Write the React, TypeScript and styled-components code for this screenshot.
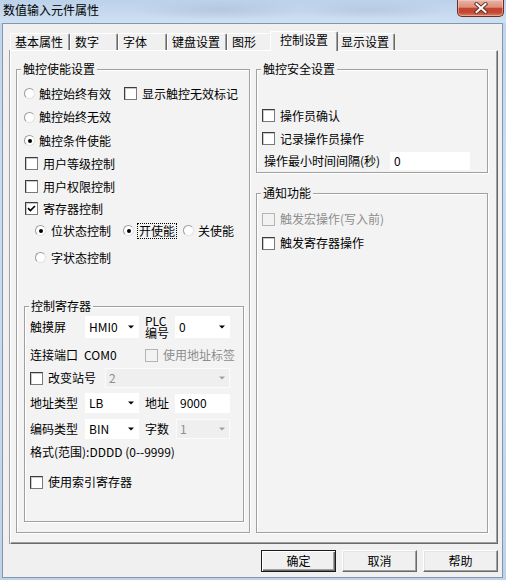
import React from 'react';
import styled, { createGlobalStyle, css } from 'styled-components';

const Global = createGlobalStyle`
  html, body { margin: 0; padding: 0; }
  body {
    width: 506px; height: 580px; overflow: hidden;
    font-family: "Noto Sans CJK SC", "Noto Sans", sans-serif;
    font-size: 12px; color: #000;
  }
`;

const PANEL_BG = '#f3f3f3';

const Window = styled.div`
  box-sizing: border-box;
  width: 506px;
  height: 580px;
  display: flex;
  flex-direction: column;
  padding: 0 3px 2px 2px;
  background: linear-gradient(180deg, #c0d4eb 0%, #cadcf0 30%, #c6d9ee 70%, #bfd2e8 100%);
`;

const TitleBar = styled.div`
  height: 23px;
  flex: none;
  display: flex;
  justify-content: space-between;
  align-items: flex-start;
  margin: 0 -3px 0 -2px;
  padding: 0 2px 0 3px;
  background:
    radial-gradient(ellipse 90px 10px at 220px 10px, rgba(150, 170, 195, 0.35), transparent),
    radial-gradient(ellipse 80px 9px at 370px 10px, rgba(150, 170, 195, 0.3), transparent),
    linear-gradient(180deg, #bcd1ea 0%, #cfe0f2 100%);
`;

const Title = styled.div`
  padding-top: 3px;
  line-height: 14px;
  font-size: 12px;
  color: #000;
  white-space: nowrap;
`;

const CloseButton = styled.div`
  box-sizing: border-box;
  width: 47px;
  height: 17px;
  display: flex;
  align-items: center;
  justify-content: center;
  border: 1px solid #6b2d25;
  border-top: none;
  border-radius: 0 0 5px 5px;
  background: linear-gradient(180deg, #e9b3a6 0%, #dc8f7b 45%, #c64330 52%, #c24a35 78%, #dc8066 100%);
  box-shadow: inset 0 0 0 1px rgba(255, 220, 210, 0.45);
`;

const Client = styled.div`
  flex: 1;
  display: flex;
  flex-direction: column;
  border: 1px solid #8296ad;
  background: #f0f0f0;
  padding: 0 4px 0 7px;
`;

const TabStrip = styled.div`
  height: 26px;
  flex: none;
  display: flex;
  align-items: flex-end;
`;

const Tab = styled.div<{ $w: number; $active?: boolean }>`
  box-sizing: border-box;
  position: relative;
  z-index: ${p => (p.$active ? 1 : 0)};
  width: ${p => p.$w}px;
  height: ${p => (p.$active ? 20 : 17)}px;
  margin: ${p => (p.$active ? '0 -2px -1px' : '0')};
  padding: ${p => (p.$active ? '0 0 0 9px' : '0 0 0 4px')};
  border-top: 1px solid #fff;
  border-left: 1px solid #fff;
  border-right: 1px solid #696969;
  border-radius: 2px 2px 0 0;
  box-shadow: inset -1px 0 0 #a0a0a0;
  background: ${p => (p.$active ? PANEL_BG : '#f0f0f0')};
  line-height: 16px;
  white-space: nowrap;
`;

const Panel = styled.div`
  box-sizing: border-box;
  height: 494px;
  flex: none;
  border-top: 1px solid #fff;
  border-left: 1px solid #fff;
  border-right: 1px solid #696969;
  border-bottom: 1px solid #696969;
  box-shadow: inset -1px -1px 0 #a0a0a0, -1px 0 0 #a0a0a0;
  background: ${PANEL_BG};
  display: grid;
  grid-template-columns: 234px 232px;
  column-gap: 6px;
  align-content: start;
  padding: 11px 0 0 5px;
`;

const Column = styled.div`
  display: flex;
  flex-direction: column;
`;

const Group = styled.fieldset<{ $h: number; $mt?: number; $w?: number }>`
  box-sizing: border-box;
  height: ${p => p.$h}px;
  ${p => (p.$w ? `width: ${p.$w}px;` : '')}
  margin: ${p => p.$mt ?? 0}px 0 0 0;
  padding: 0;
  min-width: 0;
  border: 1px solid #a0a0a0;
  box-shadow: inset 1px 1px 0 #fff, 1px 1px 0 #fff;
`;

const Legend = styled.legend`
  margin-left: 4px;
  padding: 0 2px;
  line-height: 14px;
  font-size: 12px;
  background: ${PANEL_BG};
`;

const GroupBody = styled.div<{ $pt: number; $pl: number }>`
  display: flex;
  flex-direction: column;
  padding: ${p => p.$pt}px 0 0 ${p => p.$pl}px;
`;

const Row = styled.div<{ $h?: number; $mt?: number; $indent?: number }>`
  display: flex;
  align-items: center;
  height: ${p => p.$h ?? 23}px;
  margin-top: ${p => p.$mt ?? 0}px;
  padding-left: ${p => p.$indent ?? 0}px;
  white-space: nowrap;
`;

const Option = styled.div<{ $gap?: number; $ml?: number; $disabled?: boolean }>`
  display: inline-flex;
  align-items: center;
  gap: ${p => p.$gap ?? 4}px;
  margin-left: ${p => p.$ml ?? 0}px;
  line-height: 14px;
  color: ${p => (p.$disabled ? '#8d8d8d' : '#000')};
  white-space: nowrap;
`;

const RadioCircle = styled.span<{ $checked?: boolean }>`
  box-sizing: border-box;
  flex: none;
  width: 11px;
  height: 11px;
  border-radius: 50%;
  border: 1px solid;
  border-color: #9c9c9c #e2e2e2 #e2e2e2 #9c9c9c;
  background: #fff;
  display: inline-flex;
  align-items: center;
  justify-content: center;
  &::after {
    content: '';
    width: 4px;
    height: 4px;
    border-radius: 50%;
    background: #000;
    display: ${p => (p.$checked ? 'block' : 'none')};
  }
`;

const CheckSquare = styled.span<{ $disabled?: boolean }>`
  box-sizing: border-box;
  flex: none;
  width: 13px;
  height: 13px;
  border: 1px solid;
  border-color: ${p => (p.$disabled ? '#b4b4b4' : '#3c3c3c #7a7a7a #7a7a7a #3c3c3c')};
  background: ${p => (p.$disabled ? '#f2f2f2' : '#fff')};
  box-shadow: ${p => (p.$disabled ? 'none' : 'inset 1px 1px 0 #c9c9c9')};
  display: inline-flex;
  align-items: center;
  justify-content: center;
`;

const FocusText = styled.span`
  border: 1px dotted #000;
  padding: 0 1px;
  line-height: 14px;
`;

const Label = styled.span<{ $w?: number; $pl?: number; $ml?: number }>`
  display: inline-block;
  ${p => (p.$w ? `width: ${p.$w}px;` : '')}
  padding-left: ${p => p.$pl ?? 0}px;
  margin-left: ${p => p.$ml ?? 0}px;
  line-height: 14px;
  flex: none;
`;

const StackLabel = styled.span<{ $w: number; $ml?: number }>`
  display: inline-flex;
  flex-direction: column;
  width: ${p => p.$w}px;
  margin-left: ${p => p.$ml ?? 0}px;
  line-height: 12px;
  flex: none;
`;

const Combo = styled.div<{ $w: number; $h?: number; $ml?: number; $disabled?: boolean }>`
  box-sizing: border-box;
  flex: none;
  width: ${p => p.$w}px;
  height: ${p => p.$h ?? 20}px;
  margin-left: ${p => p.$ml ?? 0}px;
  display: flex;
  align-items: center;
  justify-content: space-between;
  padding-left: 3px;
  background: ${p => (p.$disabled ? '#efefef' : '#fff')};
  border: 1px solid ${p => (p.$disabled ? '#fbfbfb' : '#fff')};
  color: ${p => (p.$disabled ? '#8d8d8d' : '#000')};
  line-height: 14px;
`;

const ArrowBox = styled.span`
  width: 14px;
  display: flex;
  justify-content: center;
  align-items: center;
`;

const TextBox = styled.div<{ $w: number; $h?: number; $ml?: number; $pl?: number }>`
  box-sizing: border-box;
  flex: none;
  width: ${p => p.$w}px;
  height: ${p => p.$h ?? 19}px;
  margin-left: ${p => p.$ml ?? 0}px;
  padding-left: ${p => p.$pl ?? 4}px;
  background: #fff;
  display: flex;
  align-items: center;
  line-height: 14px;
`;

const ButtonRow = styled.div`
  display: flex;
  justify-content: flex-end;
  gap: 6px;
  margin-top: 6px;
`;

const Button = styled.button<{ $default?: boolean }>`
  box-sizing: border-box;
  width: 75px;
  height: 22px;
  margin: 0;
  padding: 0;
  font-family: inherit;
  font-size: 12px;
  line-height: 14px;
  color: #000;
  background: #f0f0f0;
  border: 1px solid;
  ${p =>
    p.$default
      ? css`
          border-color: #1a1a1a;
          box-shadow: inset 1px 1px 0 #fff, inset -1px -1px 0 #696969, inset -2px -2px 0 #a0a0a0;
        `
      : css`
          border-color: #fff #696969 #696969 #fff;
          box-shadow: inset -1px -1px 0 #a0a0a0, inset 1px 1px 0 #e3e3e3;
        `}
`;

const Arrow = ({ disabled }: { disabled?: boolean }) => (
  <ArrowBox>
    <svg width="6" height="4" viewBox="0 0 6 4">
      <polygon points="0,0.5 6,0.5 3,3.5" fill={disabled ? '#a0a0a0' : '#000'} />
    </svg>
  </ArrowBox>
);

const Radio = ({ label, checked, gap, ml, focus }: { label: string; checked?: boolean; gap?: number; ml?: number; focus?: boolean }) => (
  <Option $gap={gap} $ml={ml}>
    <RadioCircle $checked={checked} />
    {focus ? <FocusText>{label}</FocusText> : <span>{label}</span>}
  </Option>
);

const Check = ({ label, checked, disabled, ml, gap }: { label: string; checked?: boolean; disabled?: boolean; ml?: number; gap?: number }) => (
  <Option $gap={gap ?? 5} $ml={ml} $disabled={disabled}>
    <CheckSquare $disabled={disabled}>
      {checked && (
        <svg width="9" height="9" viewBox="0 0 9 9">
          <path d="M1 4.2 L3.4 6.6 L8 2" stroke="#000" strokeWidth="1.7" fill="none" />
        </svg>
      )}
    </CheckSquare>
    <span>{label}</span>
  </Option>
);

const tabs = [
  { label: '基本属性', w: 60 },
  { label: '数字', w: 48 },
  { label: '字体', w: 49 },
  { label: '键盘设置', w: 60 },
  { label: '图形', w: 45 },
  { label: '控制设置', w: 68, active: true },
  { label: '显示设置', w: 59 },
];

export default function App() {
  return (
    <>
      <Global />
      <Window>
        <TitleBar>
          <Title>数值输入元件属性</Title>
          <CloseButton>
            <svg width="14" height="12" viewBox="0 0 14 12">
              <path d="M2.5 2 L11.5 10 M11.5 2 L2.5 10" stroke="#5b2a22" strokeWidth="3.8" strokeLinecap="square" />
              <path d="M2.5 2 L11.5 10 M11.5 2 L2.5 10" stroke="#fff" strokeWidth="2" strokeLinecap="square" />
            </svg>
          </CloseButton>
        </TitleBar>
        <Client>
          <TabStrip>
            {tabs.map(t => (
              <Tab key={t.label} $w={t.w} $active={t.active}>
                {t.label}
              </Tab>
            ))}
          </TabStrip>
          <Panel>
            <Group $h={471}>
              <Legend>触控使能设置</Legend>
              <GroupBody $pt={6} $pl={7}>
                <Row>
                  <Radio label="触控始终有效" />
                  <Check label="显示触控无效标记" ml={13} />
                </Row>
                <Row $h={24}>
                  <Radio label="触控始终无效" />
                </Row>
                <Row>
                  <Radio label="触控条件使能" checked />
                </Row>
                <Row $indent={1}>
                  <Check label="用户等级控制" />
                </Row>
                <Row $indent={1}>
                  <Check label="用户权限控制" />
                </Row>
                <Row $indent={1} $h={21}>
                  <Check label="寄存器控制" checked />
                </Row>
                <Row $indent={11}>
                  <Radio label="位状态控制" checked gap={5} />
                  <Radio label="开使能" checked ml={12} gap={3} focus />
                  <Radio label="关使能" ml={6} gap={4} />
                </Row>
                <Row $indent={11} $mt={4}>
                  <Radio label="字状态控制" gap={5} />
                </Row>
                <Group $h={223} $mt={30} $w={220}>
                  <Legend>控制寄存器</Legend>
                  <GroupBody $pt={3} $pl={5}>
                    <Row $h={22}>
                      <Label $w={55}>触摸屏</Label>
                      <Combo $w={54} $h={22}>
                        HMI0
                        <Arrow />
                      </Combo>
                      <StackLabel $w={30} $ml={6}>
                        <span>PLC</span>
                        <span>编号</span>
                      </StackLabel>
                      <Combo $w={55} $h={22}>
                        0
                        <Arrow />
                      </Combo>
                    </Row>
                    <Row $h={24} $mt={5}>
                      <Label $w={54}>连接端口</Label>
                      <Label $w={61}>COM0</Label>
                      <Check label="使用地址标签" disabled />
                    </Row>
                    <Row $h={20} $mt={1}>
                      <Check label="改变站号" />
                      <Combo $w={125} $ml={9} $disabled>
                        2
                        <Arrow disabled />
                      </Combo>
                    </Row>
                    <Row $h={22} $mt={4}>
                      <Label $w={55}>地址类型</Label>
                      <Combo $w={54}>
                        LB
                        <Arrow />
                      </Combo>
                      <Label $w={30} $ml={6}>
                        地址
                      </Label>
                      <TextBox $w={55} $pl={5}>
                        9000
                      </TextBox>
                    </Row>
                    <Row $h={22} $mt={4}>
                      <Label $w={55}>编码类型</Label>
                      <Combo $w={54}>
                        BIN
                        <Arrow />
                      </Combo>
                      <Label $w={31} $ml={6}>
                        字数
                      </Label>
                      <Combo $w={54} $disabled>
                        1
                        <Arrow disabled />
                      </Combo>
                    </Row>
                    <Row $h={22} $mt={1}>
                      <Label>格式(范围):DDDD (0--9999)</Label>
                    </Row>
                    <Row $h={22} $mt={8}>
                      <Check label="使用索引寄存器" />
                    </Row>
                  </GroupBody>
                </Group>
              </GroupBody>
            </Group>
            <Column>
              <Group $h={111}>
                <Legend>触控安全设置</Legend>
                <GroupBody $pt={28} $pl={5}>
                  <Row>
                    <Check label="操作员确认" />
                  </Row>
                  <Row>
                    <Check label="记录操作员操作" />
                  </Row>
                  <Row $h={20} $mt={1}>
                    <Label $w={126} $pl={2}>
                      操作最小时间间隔(秒)
                    </Label>
                    <TextBox $w={80} $h={18}>
                      0
                    </TextBox>
                  </Row>
                </GroupBody>
              </Group>
              <Group $h={347} $mt={13}>
                <Legend>通知功能</Legend>
                <GroupBody $pt={7} $pl={5}>
                  <Row $h={24}>
                    <Check label="触发宏操作(写入前)" disabled />
                  </Row>
                  <Row $h={24}>
                    <Check label="触发寄存器操作" />
                  </Row>
                </GroupBody>
              </Group>
            </Column>
          </Panel>
          <ButtonRow>
            <Button $default>确定</Button>
            <Button>取消</Button>
            <Button>帮助</Button>
          </ButtonRow>
        </Client>
      </Window>
    </>
  );
}
